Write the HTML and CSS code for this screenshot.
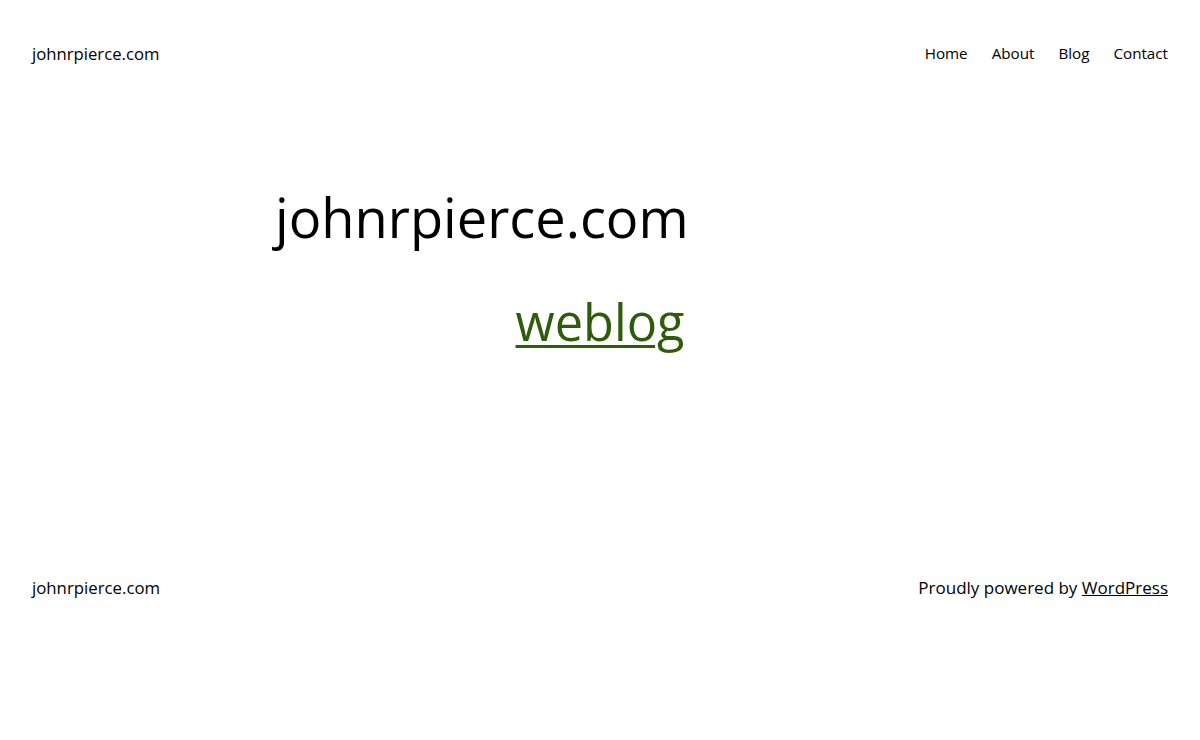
FILE: index.html
```html
<!DOCTYPE html>
<html lang="en">
<head>
<meta charset="utf-8">
<title>johnrpierce.com</title>
<link rel="stylesheet" href="styles.css">
</head>
<body>
<header class="site-header">
  <a class="site-title" href="#">johnrpierce.com</a>
  <nav class="nav">
    <a href="#">Home</a>
    <a href="#">About</a>
    <a href="#">Blog</a>
    <a href="#">Contact</a>
  </nav>
</header>
<main class="main">
  <h1 class="hero-title">johnrpierce.com</h1>
  <p class="hero-link"><a href="#">weblog</a></p>
</main>
<footer class="site-footer">
  <a class="site-title" href="#">johnrpierce.com</a>
  <p class="credit">Proudly powered by <a href="#">WordPress</a></p>
</footer>
</body>
</html>
```
FILE: styles.css
```css
html, body { margin: 0; padding: 0; background: #fff; }
body {
  font-family: "Open Sans", "Noto Sans", sans-serif;
  color: #000;
}
a { color: inherit; }
.site-header {
  display: flex;
  justify-content: space-between;
  align-items: center;
  padding: 41px 32px 0;
  height: 24px;
}
.site-title {
  font-size: 16.7px;
  text-decoration: none;
  color: #000;
}
.nav { display: flex; gap: 24px; font-size: 15.2px; }
.nav a { text-decoration: none; color: #000; }
.main {
  width: 650px;
  margin: 0 auto;
  padding-top: 120px;
  height: 510px;
  box-sizing: border-box;
}
.hero-title {
  margin: 0;
  font-weight: 400;
  font-size: 54.2px;
  line-height: 1.2;
}
.hero-link {
  margin: 42px 0 0;
  text-align: center;
  font-size: 50.5px;
  line-height: 1.2;
}
.hero-link a { color: #2f5c0a; text-decoration-thickness: 3px; text-underline-offset: 4px; }
.site-footer {
  display: flex;
  justify-content: space-between;
  align-items: center;
  padding: 0 32px;
  height: 24px;
  font-size: 17px;
}
.site-footer .site-title { font-size: 16.8px; }
.credit { margin: 0; }
.credit a { color: #000; }
```
